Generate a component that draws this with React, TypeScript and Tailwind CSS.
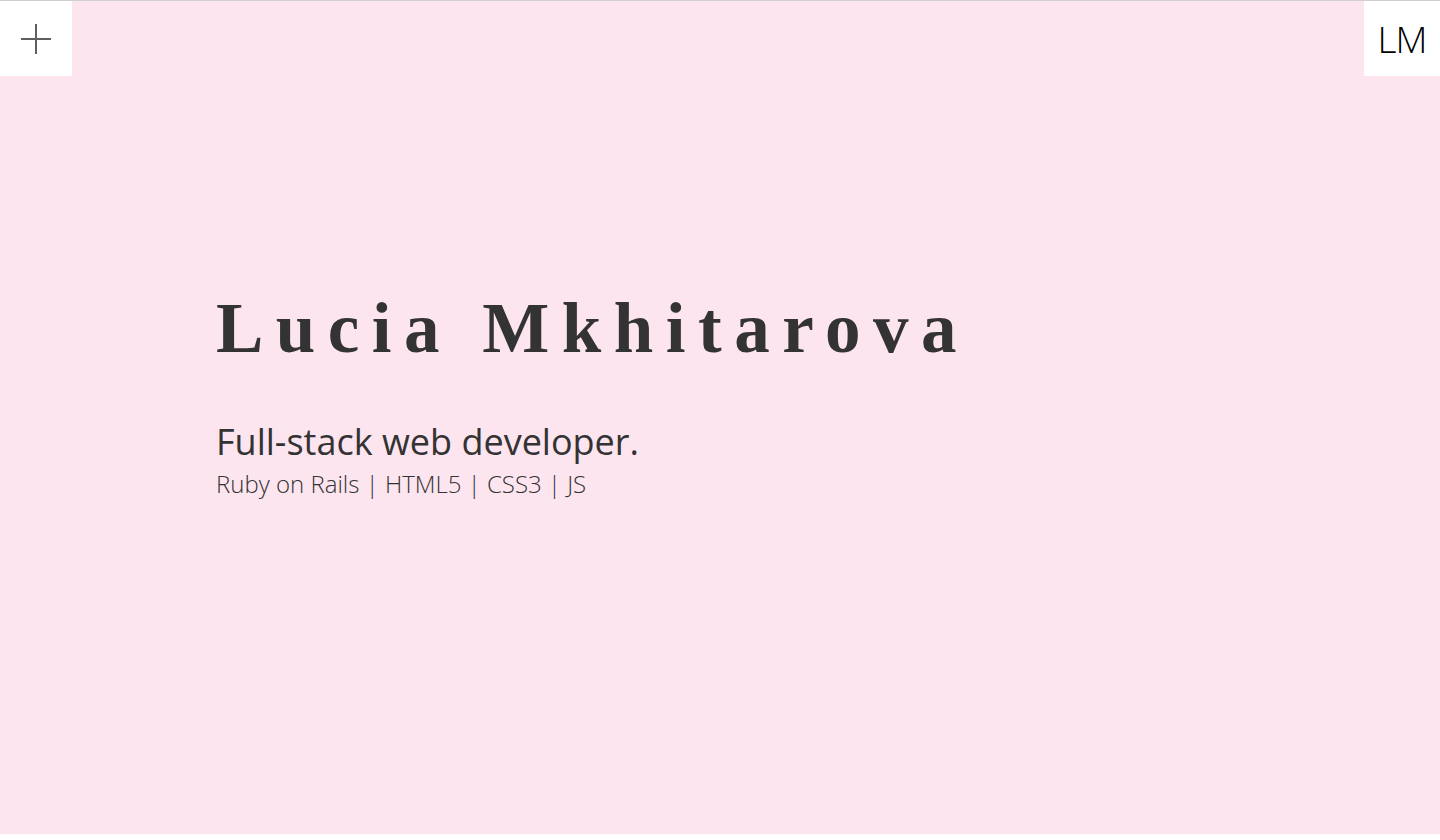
const PlusIcon = () => (
  <svg width="30" height="30" viewBox="0 0 30 30" fill="none" stroke="#5f5f5f" strokeWidth="2">
    <line x1="15" y1="0" x2="15" y2="30" />
    <line x1="0" y1="15" x2="30" y2="15" />
  </svg>
);

const App = () => {
  return (
    <div className="w-full h-[840px] bg-white border-t border-[#cfcfcf] overflow-hidden">
      <section className="relative h-[833px] bg-[#fde5ef]">
        {/* Menu toggle */}
        <button className="absolute top-0 left-0 w-[72px] h-[75px] bg-white flex items-center justify-center">
          <PlusIcon />
        </button>

        {/* Monogram */}
        <div
          className="absolute top-0 right-0 w-[76px] h-[75px] bg-white flex items-center justify-center text-[37px] font-light text-black tracking-[-1px]"
          style={{ fontFamily: '"Open Sans", sans-serif' }}
        >
          LM
        </div>

        <div className="pl-[216px] pt-[285px]">
          <h1
            className="text-[71px] font-bold text-[#333] tracking-[12.5px] leading-[1.2]"
            style={{ fontFamily: '"Liberation Serif", serif' }}
          >
            Lucia Mkhitarova
          </h1>
          <div className="mt-[49px] text-[#333]" style={{ fontFamily: '"Open Sans", sans-serif' }}>
            <p className="text-[36px] leading-[1.2]">Full-stack web developer.</p>
            <p className="mt-[5px] text-[24px] font-light leading-[1.3]">
              Ruby on Rails <span className="text-[#2d3348]">|</span> HTML5 <span className="text-[#2d3348]">|</span> CSS3{' '}
              <span className="text-[#2d3348]">|</span> JS
            </p>
          </div>
        </div>
      </section>
    </div>
  );
};

export default App;
